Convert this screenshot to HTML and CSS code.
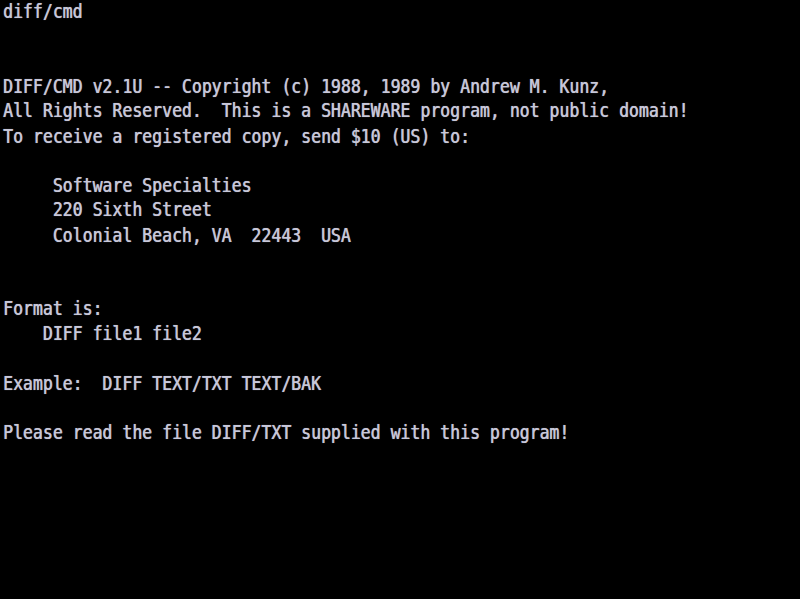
FILE: index.html
```html
<!DOCTYPE html>
<html>
<head>
<meta charset="utf-8">
<link rel="stylesheet" href="styles.css">
</head>
<body>
<pre class="screen">diff/cmd


DIFF/CMD v2.1U -- Copyright (c) 1988, 1989 by Andrew M. Kunz,
All Rights Reserved.  This is a SHAREWARE program, not public domain!
To receive a registered copy, send $10 (US) to:

     Software Specialties
     220 Sixth Street
     Colonial Beach, VA  22443  USA


Format is:
    DIFF file1 file2

Example:  DIFF TEXT/TXT TEXT/BAK

Please read the file DIFF/TXT supplied with this program!</pre>
</body>
</html>
```

FILE: styles.css
```css
html, body {
  margin: 0;
  padding: 0;
  background: #000;
  width: 800px;
  height: 599px;
  overflow: hidden;
}
.screen {
  margin: 0;
  padding: 0 0 0 3px;
  font-family: "DejaVu Sans Mono", "Liberation Mono", monospace;
  font-size: 16.5px;
  line-height: 21.52px;
  color: #c8c8da;
  transform: scaleY(1.15);
  transform-origin: 0 0;
  text-shadow: 0.5px 0 0 rgba(200, 200, 218, 0.8), 0 0 1px rgba(200, 200, 220, 0.5);
}
```
